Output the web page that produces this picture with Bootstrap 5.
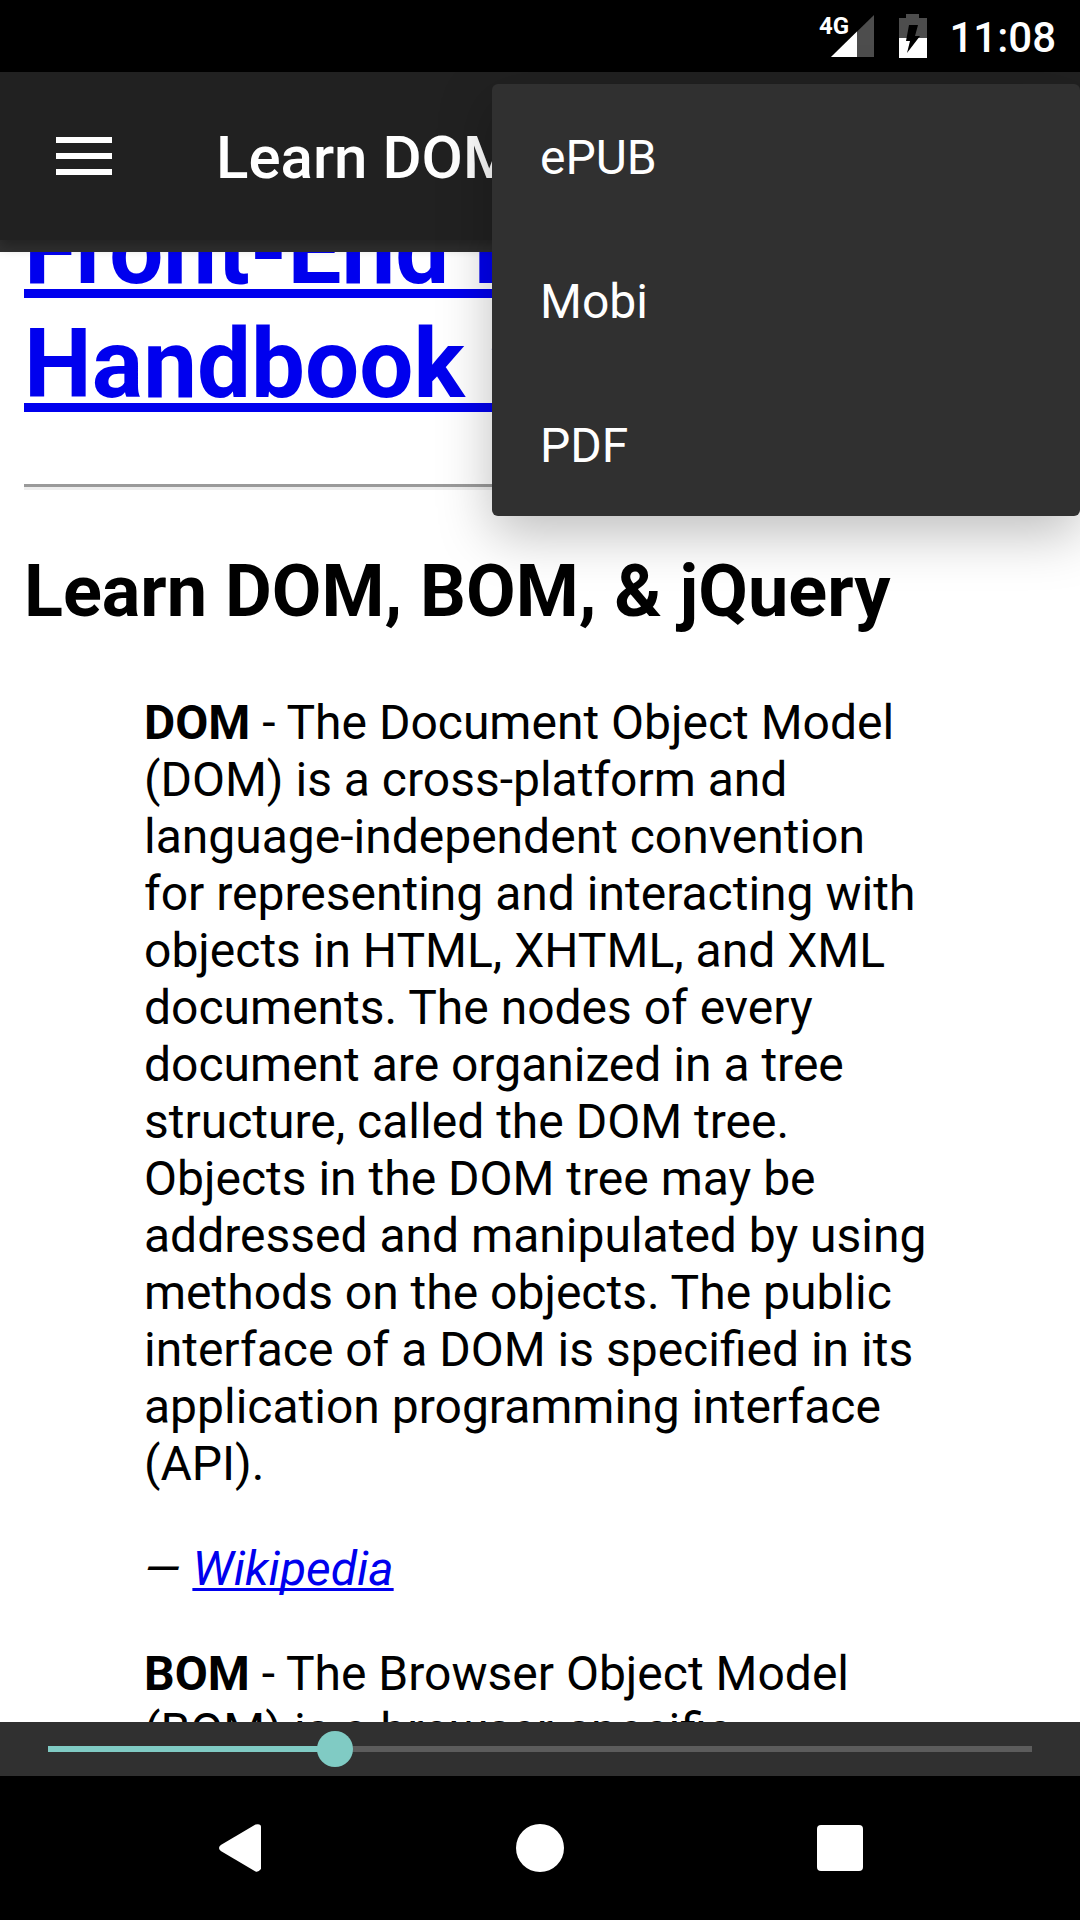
<!DOCTYPE html>
<html lang="en">
<head>
<meta charset="utf-8">
<meta name="viewport" content="width=device-width, initial-scale=1">
<title>Learn DOM, BOM &amp; jQuery</title>
<link href="https://cdn.jsdelivr.net/npm/bootstrap@5.3.0/dist/css/bootstrap.min.css" rel="stylesheet">
<style>
  body { font-family: Roboto, "Liberation Sans", sans-serif; background: #303030; color: #000; }
  .status-bar { height: 72px; padding: 0 24px; background: #000; color: #fff; }
  .signal { width: 56px; height: 44px; margin-right: 24px; overflow: visible; }
  .signal text { font: 700 24px Roboto, sans-serif; fill: #fff; }
  .battery { width: 28px; height: 44px; margin-right: 22px; }
  .clock { padding-top: 3px; font-size: 42px; line-height: 48px; font-weight: 500; }
  .app-bar { height: 168px; padding: 0 56px; gap: 104px; background: #212121; color: #fff; z-index: 2; box-shadow: 0 6px 12px rgba(0, 0, 0, .3); }
  .menu-btn { width: 56px; height: 38px; }
  .app-title { padding-top: 4px; font-size: 60px; line-height: 72px; font-weight: 500; }
  .format-menu { top: 12px; right: 0; width: 588px; --bs-dropdown-bg: #303030; --bs-dropdown-link-color: #fff; --bs-dropdown-link-hover-color: #fff; --bs-dropdown-link-hover-bg: #424242; border-radius: 6px; box-shadow: 0 18px 54px rgba(0, 0, 0, .26); }
  .format-menu .dropdown-item { padding: 46px 48px 42px; font-size: 48px; line-height: 56px; }
  .reader { margin-top: 12px; padding: 0 24px; background: #fff; font-size: 48px; line-height: 57px; }
  .page-scrolled { margin-top: -59px; }
  .reader a { color: #00e; text-decoration-skip-ink: none; }
  .reader h1 { font-size: 96px; line-height: 114px; font-weight: 700; margin: 0 0 63px; }
  .reader h1 a { text-decoration-thickness: 9px; text-underline-offset: 6px; }
  .reader hr { margin: 0 0 60px; border: 0; border-top: 3px solid #9a9a9a; border-bottom: 3px solid #eee; opacity: 1; }
  .reader h2 { font-size: 72px; line-height: 84px; font-weight: 700; margin: 0 0 60px; }
  .quoted { margin: 0 120px; }
  .quoted p { margin: 0 0 48px; }
  .quoted a { text-decoration-thickness: 3px; text-underline-offset: 3px; }
  .seek-bar { height: 54px; padding: 0 30px; background: #303030; }
  .seek-bar .form-range { height: 36px; background: linear-gradient(to right, transparent 18px, #80cbc4 18px, #80cbc4 30%, #5c5c5c 30%, #5c5c5c calc(100% - 18px), transparent calc(100% - 18px)) center / 100% 6px no-repeat; }
  .seek-bar .form-range::-webkit-slider-runnable-track { height: 6px; background: transparent; }
  .seek-bar .form-range::-webkit-slider-thumb { width: 36px; height: 36px; margin-top: -15px; background: #80cbc4; border-radius: 50%; }
  .system-nav { height: 144px; padding: 0 90px; background: #000; }
  .system-nav svg { width: 48px; height: 48px; }
</style>
<script src="https://cdn.jsdelivr.net/npm/bootstrap@5.3.0/dist/js/bootstrap.bundle.min.js" defer></script>
</head>
<body class="vh-100 d-flex flex-column overflow-hidden">
  <div class="status-bar flex-shrink-0 d-flex align-items-center justify-content-end">
    <svg class="signal" viewBox="0 0 56 44" role="img" aria-label="4G signal">
      <path d="M55 1V43H12z" fill="#4d4d4d"/>
      <path d="M38 17.600V43H12z" fill="#fff"/>
      <text x="0" y="20">4G</text>
    </svg>
    <svg class="battery" viewBox="0 0 28 44" role="img" aria-label="Battery charging">
      <path d="M7 0H20V4H28V24H0V4H7z" fill="#4d4d4d"/>
      <path d="M0 24H28V44H0z" fill="#fff"/>
      <path d="M10 11H19L16 22H21L8 39L11 27H7z" fill="#000"/>
    </svg>
    <span class="clock">11:08</span>
  </div>

  <header class="app-bar flex-shrink-0 d-flex align-items-center position-relative">
    <button class="menu-btn btn p-0 border-0 rounded-0 d-flex text-white flex-shrink-0" type="button" aria-label="Open contents">
      <svg width="56" height="38" viewBox="0 0 56 38" fill="currentColor" aria-hidden="true"><path d="M0 0H56V6H0zM0 16H56V22H0zM0 32H56V38H0z"/></svg>
    </button>
    <div class="app-title text-truncate">Learn DOM, BOM &amp; jQuery</div>
    <ul class="format-menu dropdown-menu show p-0 border-0">
      <li><a class="dropdown-item" href="#epub">ePUB</a></li>
      <li><a class="dropdown-item" href="#mobi">Mobi</a></li>
      <li><a class="dropdown-item" href="#pdf">PDF</a></li>
    </ul>
  </header>

  <main class="reader flex-grow-1 overflow-hidden">
    <article class="page-scrolled">
      <h1><a href="#handbook">Front-End Developer Handbook 2017</a></h1>
      <hr>
      <h2>Learn DOM, BOM, &amp; jQuery</h2>
      <blockquote class="quoted">
        <p><strong>DOM</strong> - The Document Object Model (DOM) is a cross-platform and language-independent convention for representing and interacting with objects in HTML, XHTML, and XML documents. The nodes of every document are organized in a tree structure, called the DOM tree. Objects in the DOM tree may be addressed and manipulated by using methods on the objects. The public interface of a DOM is specified in its application programming interface (API).</p>
        <p><em>— <a href="#wikipedia">Wikipedia</a></em></p>
        <p><strong>BOM</strong> - The Browser Object Model (BOM) is a browser-specific</p>
      </blockquote>
    </article>
  </main>

  <div class="seek-bar flex-shrink-0 d-flex align-items-center">
    <input class="form-range" type="range" min="0" max="1000" value="292" aria-label="Reading position">
  </div>

  <nav class="system-nav flex-shrink-0 d-flex align-items-center" aria-label="System">
    <button class="btn p-0 border-0 d-flex justify-content-center flex-fill" type="button" aria-label="Back">
      <svg viewBox="0 0 48 48" fill="#fff"><path d="M39.500 .6 4.800 21Q1.200 24 4.800 27L39.500 47.400Q42 48.600 45 45V3Q45-.6 39.500 .6z"/></svg>
    </button>
    <button class="btn p-0 border-0 d-flex justify-content-center flex-fill" type="button" aria-label="Home">
      <svg viewBox="0 0 48 48" fill="#fff"><circle cx="24" cy="24" r="24"/></svg>
    </button>
    <button class="btn p-0 border-0 d-flex justify-content-center flex-fill" type="button" aria-label="Recent apps">
      <svg viewBox="0 0 48 48" fill="#fff"><rect x="1" y="1" width="46" height="46" rx="4"/></svg>
    </button>
  </nav>
</body>
</html>
